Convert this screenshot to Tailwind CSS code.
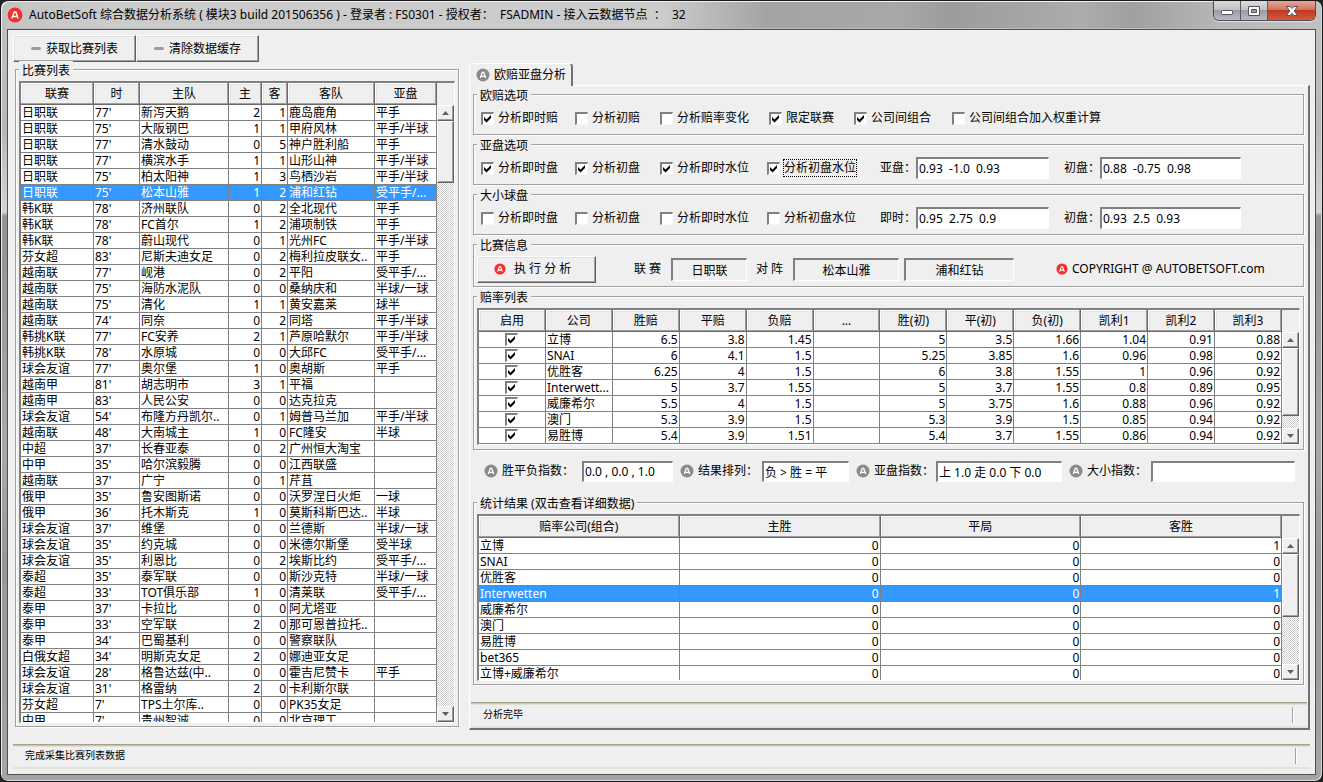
<!DOCTYPE html>
<html lang="zh-CN">
<head>
  <meta charset="UTF-8">
  <meta name="viewport" content="width=device-width, initial-scale=1.0">
  <title>AutoBetSoft 综合数据分析系统</title>
  <script src="https://cdn.jsdelivr.net/npm/@tailwindcss/browser@4"></script>
</head>
<body class="h-screen overflow-hidden bg-[#222] font-['Noto_Sans','Noto_Sans_CJK_SC',sans-serif] text-xs text-black">

  <!-- Shared shapes -->
  <svg class="hidden">
    <symbol id="tick" viewBox="0 0 13 13"><path d="M3 5l2.500 2.500L10 3v3l-4.500 4.500L3 8z" fill="#000"/></symbol>
    <symbol id="logo" viewBox="0 0 14 14"><circle cx="7" cy="7" r="6.500" fill="currentColor"/><path d="M4.300 10L6.300 4.300h1.400L9.700 10M5.200 8.300h3.600" fill="none" stroke="#fff" stroke-width="1.300"/></symbol>
    <symbol id="arrow-up" viewBox="0 0 7 4"><path d="M0 4L3.500 0L7 4z" fill="#606060"/></symbol>
    <symbol id="arrow-down" viewBox="0 0 7 4"><path d="M0 0h7L3.500 4z" fill="#606060"/></symbol>
  </svg>

  <div class="flex h-full flex-col rounded-lg border border-[#1a1a1a] bg-[linear-gradient(#c2c2c2_0,#b8b8b8_130px,#d4d4d4_211px,#949494_215px,#a8a8a8_450px,#989898_560px,#a4a4a4_100%)] px-1.5 pb-1.5 shadow-[inset_1px_1px_0_#f0f0f0,inset_-1px_-1px_0_#d8d8d8]">

    <!-- Title bar -->
    <header class="flex h-7 shrink-0 items-center gap-1.5 bg-[linear-gradient(90deg,#c4c4c4_0,#cbcbcb_8%,#cccccc_50%,#a4a4a4_58%,#a8a8a8_68%,#9c9c9c_72%,#acacac_82%,#a0a0a0_86%,#b8b8b8_93%,#c0c0c0_100%)] bg-[length:100%_26px] bg-[position:0_1px] bg-no-repeat">
      <svg class="size-4 text-[#f23030]"><use href="#logo"/></svg>
      <h1 class="flex-1 whitespace-pre">AutoBetSoft 综合数据分析系统 ( 模块3 build 201506356 ) - 登录者 : FS0301 - 授权者：  FSADMIN - 接入云数据节点  ：  32</h1>
      <div class="flex h-5 self-start overflow-hidden rounded-b-md border border-t-0 border-[#4a4a5a] shadow-[0_1px_0_#e4e4e4]">
        <button class="flex w-[27px] items-center justify-center border-r border-[#5a5a66] bg-[linear-gradient(#dcdcdc_0,#c2c2c6_45%,#9b9ba2_50%,#b9b9be_100%)]" aria-label="最小化">
          <svg class="h-2 w-3" viewBox="0 0 12 8"><rect x=".5" y="3.500" width="11" height="4" rx="1" fill="#fff" stroke="#51515f"/></svg>
        </button>
        <button class="flex w-[27px] items-center justify-center border-r border-[#5a5a66] bg-[linear-gradient(#dcdcdc_0,#c2c2c6_45%,#9b9ba2_50%,#b9b9be_100%)]" aria-label="最大化">
          <svg class="h-2.5 w-3" viewBox="0 0 12 10"><path d="M.5.5h11v9H.5zM3.500 3.500v3h5v-3z" fill="#fff" fill-rule="evenodd" stroke="#51515f"/></svg>
        </button>
        <button class="flex w-[47px] items-center justify-center bg-[linear-gradient(#e5a798_0,#d4735f_45%,#bd3a20_50%,#d8583c_100%)]" aria-label="关闭">
          <svg class="h-2.5 w-3" viewBox="0 0 12 10"><path d="M.5.5h3.500l2 2 2-2h3.500L8.200 5l3.300 4.500H8l-2-2-2 2H.5L3.800 5z" fill="#fff" stroke="#51515f"/></svg>
        </button>
      </div>
    </header>

    <div class="flex min-h-0 flex-1 flex-col border border-[#505050] bg-[#efefef] px-[5px] py-[5px]">
      <main class="flex min-h-0 flex-1 gap-2.5">

        <!-- Match list -->
        <section class="flex w-[446px] shrink-0 flex-col pb-[17px]">
          <div class="flex">
            <button class="flex h-[27px] w-[123px] items-center justify-center gap-[5px] border border-t-white border-r-[#606060] border-b-[#606060] border-l-white shadow-[inset_-1px_-1px_0_#a0a0a0,inset_1px_1px_0_#e3e3e3]"><span class="h-[3px] w-2.5 rounded-sm bg-[#9c9c9c]"></span>获取比赛列表</button>
            <button class="flex h-[27px] w-[123px] items-center justify-center gap-[5px] border border-t-white border-r-[#606060] border-b-[#606060] border-l-white shadow-[inset_-1px_-1px_0_#a0a0a0,inset_1px_1px_0_#e3e3e3]"><span class="h-[3px] w-2.5 rounded-sm bg-[#9c9c9c]"></span>清除数据缓存</button>
          </div>
          <fieldset class="-mt-px ml-0.5 flex min-h-0 flex-1 flex-col border border-[#a0a0a0] px-[3px] pt-1 pb-[3px] shadow-[1px_1px_0_#fff,inset_1px_1px_0_#fff]">
            <legend class="bg-[#efefef] px-[3px] pt-1 leading-3">比赛列表</legend>
            <div class="flex h-full min-h-0 overflow-hidden border-t-2 border-r border-b border-l-2 border-t-[#808080] border-r-white border-b-white border-l-[#808080]">
              <div class="flex-1 overflow-hidden">
                <table class="w-full table-fixed border-separate border-spacing-0">
                  <colgroup><col class="w-[73px]"><col class="w-[46px]"><col class="w-[89px]"><col class="w-[33px]"><col class="w-[26px]"><col class="w-[87px]"><col></colgroup>
                  <thead id="match-head"></thead>
                  <tbody id="match-body" class="bg-white"></tbody>
                </table>
              </div>
              <div class="scroll flex w-[17px] flex-col pt-[22px]" data-thumb="62"></div>
            </div>
          </fieldset>
        </section>

        <!-- Analysis tab -->
        <section class="flex min-w-0 flex-1 flex-col pt-7 pb-3.5">
          <button class="relative z-10 -mb-px flex h-[23px] w-[104px] shrink-0 items-center gap-1 rounded-t-sm border-t border-r-2 border-l border-t-white border-r-[#707070] border-l-white bg-[#efefef] pl-1.5">
            <svg class="size-3.5 text-[#8a8a8a]"><use href="#logo"/></svg>欧赔亚盘分析
          </button>
          <div class="flex min-h-0 flex-1 flex-col border-t border-r-2 border-b-2 border-l border-t-white border-r-[#707070] border-b-[#707070] border-l-white">
            <form class="flex min-h-0 flex-1 flex-col gap-px pr-1 pl-[3px]" onsubmit="return false">

              <fieldset class="border border-[#a0a0a0] px-[3px] shadow-[1px_1px_0_#fff,inset_1px_1px_0_#fff]">
                <legend class="bg-[#efefef] px-[3px] pt-1 leading-3">欧赔选项</legend>
                <div class="grid h-8 grid-cols-[94px_85px_109px_85px_98px_auto] items-center pl-1">
                  <label class="check flex items-center gap-1" data-on="1">分析即时赔</label>
                  <label class="check flex items-center gap-1">分析初赔</label>
                  <label class="check flex items-center gap-1">分析赔率变化</label>
                  <label class="check flex items-center gap-1" data-on="1">限定联赛</label>
                  <label class="check flex items-center gap-1" data-on="1">公司间组合</label>
                  <label class="check flex items-center gap-1">公司间组合加入权重计算</label>
                </div>
              </fieldset>

              <fieldset class="border border-[#a0a0a0] px-[3px] shadow-[1px_1px_0_#fff,inset_1px_1px_0_#fff]">
                <legend class="bg-[#efefef] px-[3px] pt-1 leading-3">亚盘选项</legend>
                <div class="grid h-8 grid-cols-[94px_85px_107px_113px_36px_148px_36px_141px] items-center pl-1">
                  <label class="check flex items-center gap-1" data-on="1">分析即时盘</label>
                  <label class="check flex items-center gap-1" data-on="1">分析初盘</label>
                  <label class="check flex items-center gap-1" data-on="1">分析即时水位</label>
                  <label class="check flex items-center gap-1" data-on="1"><span class="outline-1 outline-dotted outline-black">分析初盘水位</span></label>
                  <label for="asia-now">亚盘：</label>
                  <input id="asia-now" class="h-[22px] w-[133px] border-t-2 border-r border-b border-l-2 border-t-[#808080] border-r-white border-b-white border-l-[#808080] bg-white px-px outline-none" value="0.93  -1.0  0.93">
                  <label for="asia-first">初盘：</label>
                  <input id="asia-first" class="h-[22px] w-full border-t-2 border-r border-b border-l-2 border-t-[#808080] border-r-white border-b-white border-l-[#808080] bg-white px-px outline-none" value="0.88  -0.75  0.98">
                </div>
              </fieldset>

              <fieldset class="border border-[#a0a0a0] px-[3px] shadow-[1px_1px_0_#fff,inset_1px_1px_0_#fff]">
                <legend class="bg-[#efefef] px-[3px] pt-1 leading-3">大小球盘</legend>
                <div class="grid h-8 grid-cols-[94px_85px_107px_113px_36px_148px_36px_141px] items-center pl-1">
                  <label class="check flex items-center gap-1">分析即时盘</label>
                  <label class="check flex items-center gap-1">分析初盘</label>
                  <label class="check flex items-center gap-1">分析即时水位</label>
                  <label class="check flex items-center gap-1">分析初盘水位</label>
                  <label for="total-now">即时：</label>
                  <input id="total-now" class="h-[22px] w-[133px] border-t-2 border-r border-b border-l-2 border-t-[#808080] border-r-white border-b-white border-l-[#808080] bg-white px-px outline-none" value="0.95  2.75  0.9">
                  <label for="total-first">初盘：</label>
                  <input id="total-first" class="h-[22px] w-full border-t-2 border-r border-b border-l-2 border-t-[#808080] border-r-white border-b-white border-l-[#808080] bg-white px-px outline-none" value="0.93  2.5  0.93">
                </div>
              </fieldset>

              <fieldset class="border border-[#a0a0a0] px-[3px] shadow-[1px_1px_0_#fff,inset_1px_1px_0_#fff]">
                <legend class="bg-[#efefef] px-[3px] pt-1 leading-3">比赛信息</legend>
                <div class="flex h-[34px] items-center">
                  <button class="mr-[38px] flex h-[27px] w-[119px] items-center gap-2 border border-t-white border-r-[#606060] border-b-[#606060] border-l-white pl-4 shadow-[inset_-1px_-1px_0_#a0a0a0,inset_1px_1px_0_#e3e3e3]"><svg class="size-3 text-[#f23030]"><use href="#logo"/></svg>执 行 分 析</button>
                  <label for="league" class="w-[37px]">联 赛</label>
                  <input id="league" readonly class="mr-[9px] h-[23px] w-[76px] border-t-2 border-r border-b border-l-2 border-t-[#808080] border-r-white border-b-white border-l-[#808080] text-center outline-none" value="日职联">
                  <label for="home" class="w-[37px]">对 阵</label>
                  <input id="home" readonly class="mr-[5px] h-[23px] w-[106px] border-t-2 border-r border-b border-l-2 border-t-[#808080] border-r-white border-b-white border-l-[#808080] text-center outline-none" value="松本山雅">
                  <input aria-label="客队" readonly class="mr-[42px] h-[23px] w-[110px] border-t-2 border-r border-b border-l-2 border-t-[#808080] border-r-white border-b-white border-l-[#808080] text-center outline-none" value="浦和红钻">
                  <svg class="mr-1 size-3 text-[#f23030]"><use href="#logo"/></svg>
                  <span class="whitespace-nowrap">COPYRIGHT @ AUTOBETSOFT.com</span>
                </div>
              </fieldset>

              <fieldset class="border border-[#a0a0a0] px-[3px] pt-1 pb-1 shadow-[1px_1px_0_#fff,inset_1px_1px_0_#fff]">
                <legend class="bg-[#efefef] px-[3px] pt-1 leading-3">赔率列表</legend>
                <div class="flex border-t-2 border-r border-b border-l-2 border-t-[#808080] border-r-white border-b-white border-l-[#808080]">
                  <div class="flex-1 overflow-hidden">
                    <table class="w-full table-fixed border-separate border-spacing-0">
                      <thead id="odds-head"></thead>
                      <tbody id="odds-body" class="bg-white"></tbody>
                    </table>
                  </div>
                  <div class="scroll flex w-[17px] flex-col pt-[22px]" data-thumb="68"></div>
                </div>
              </fieldset>

              <div class="flex h-[42px] shrink-0 items-center gap-[7px] pb-0.5 pl-[11px]">
                <div class="flex items-center">
                  <label for="idx-win" class="flex w-[98px] items-center gap-1"><svg class="size-3.5 text-[#8a8a8a]"><use href="#logo"/></svg>胜平负指数：</label>
                  <input id="idx-win" class="h-[21px] w-[91px] border-t-2 border-r border-b border-l-2 border-t-[#808080] border-r-white border-b-white border-l-[#808080] bg-white px-px outline-none" value="0.0 , 0.0 , 1.0">
                </div>
                <div class="flex items-center">
                  <label for="idx-order" class="flex w-[82px] items-center gap-1 whitespace-nowrap"><svg class="size-3.5 text-[#8a8a8a]"><use href="#logo"/></svg>结果排列：</label>
                  <input id="idx-order" class="h-[21px] w-[87px] border-t-2 border-r border-b border-l-2 border-t-[#808080] border-r-white border-b-white border-l-[#808080] bg-white px-px outline-none" value="负 &gt; 胜 = 平">
                </div>
                <div class="flex items-center">
                  <label for="idx-asia" class="flex w-20 items-center gap-1 whitespace-nowrap"><svg class="size-3.5 text-[#8a8a8a]"><use href="#logo"/></svg>亚盘指数：</label>
                  <input id="idx-asia" class="h-[21px] w-[126px] border-t-2 border-r border-b border-l-2 border-t-[#808080] border-r-white border-b-white border-l-[#808080] bg-white px-px outline-none" value="上 1.0 走 0.0 下 0.0">
                </div>
                <div class="flex items-center">
                  <label for="idx-total" class="flex w-[82px] items-center gap-1 whitespace-nowrap"><svg class="size-3.5 text-[#8a8a8a]"><use href="#logo"/></svg>大小指数：</label>
                  <input id="idx-total" class="h-[21px] w-36 border-t-2 border-r border-b border-l-2 border-t-[#808080] border-r-white border-b-white border-l-[#808080] bg-white px-px outline-none">
                </div>
              </div>

              <fieldset class="mb-[17px] min-h-0 flex-1 border border-[#a0a0a0] px-[3px] pt-1 pb-[3px] shadow-[1px_1px_0_#fff,inset_1px_1px_0_#fff]">
                <legend class="bg-[#efefef] px-[3px] pt-1 leading-3">统计结果 (双击查看详细数据)</legend>
                <div class="flex h-full overflow-hidden border-t-2 border-r border-b border-l-2 border-t-[#808080] border-r-white border-b-white border-l-[#808080]">
                  <div class="flex-1 overflow-hidden">
                    <table class="w-full table-fixed border-separate border-spacing-0">
                      <thead id="stat-head"></thead>
                      <tbody id="stat-body" class="bg-white"></tbody>
                    </table>
                  </div>
                  <div class="scroll flex w-[17px] flex-col pt-[22px]" data-thumb="63"></div>
                </div>
              </fieldset>
            </form>

            <div class="mx-px flex h-[26px] shrink-0 items-center justify-between border-t border-b-2 border-t-[#a0a08c] border-b-[#e4e2d4] pr-[13px] pl-3 text-[10px] shadow-[inset_0_1px_0_#c8c6b4,inset_0_2px_0_#e2e0d2]">
              <span>分析完毕</span><span class="h-4 border-r border-l border-l-[#a0a0a0] border-r-white"></span>
            </div>
          </div>
        </section>
      </main>

      <footer class="flex h-[25px] shrink-0 items-center justify-between border-t border-b-2 border-t-[#a0a08c] border-b-[#e4e2d4] pr-[13px] pl-3 text-[10px] shadow-[inset_0_1px_0_#c8c6b4,inset_0_2px_0_#e2e0d2]">
        <span>完成采集比赛列表数据</span><span class="h-4 border-r border-l border-l-[#a0a0a0] border-r-white"></span>
      </footer>
    </div>
  </div>

  <script>
    const matches = `日职联|77'|新泻天鹅|2|1|鹿岛鹿角|平手
日职联|75'|大阪钢巴|1|1|甲府风林|平手/半球
日职联|77'|清水鼓动|0|5|神户胜利船|平手
日职联|77'|横滨水手|1|1|山形山神|平手/半球
日职联|75'|柏太阳神|1|3|鸟栖沙岩|平手/半球
日职联|75'|松本山雅|1|2|浦和红钻|受平手/...
韩K联|78'|济州联队|0|2|全北现代|平手
韩K联|78'|FC首尔|1|2|浦项制铁|平手
韩K联|78'|蔚山现代|0|1|光州FC|平手/半球
芬女超|83'|尼斯夫迪女足|0|2|梅利拉皮联女..|平手
越南联|77'|岘港|0|2|平阳|受平手/...
越南联|75'|海防水泥队|0|0|桑纳庆和|半球/一球
越南联|75'|清化|1|1|黄安嘉莱|球半
越南联|74'|同奈|0|2|同塔|平手/半球
韩挑K联|77'|FC安养|2|1|芦原哈默尔|平手/半球
韩挑K联|78'|水原城|0|0|大邱FC|受平手/...
球会友谊|77'|奥尔堡|1|0|奥胡斯|平手
越南甲|81'|胡志明市|3|1|平福|
越南甲|83'|人民公安|0|0|达克拉克|
球会友谊|54'|布隆方丹凯尔..|0|1|姆普马兰加|平手/半球
越南联|48'|大南城主|1|0|FC隆安|半球
中超|37'|长春亚泰|0|2|广州恒大淘宝|
中甲|35'|哈尔滨毅腾|0|0|江西联盛|
越南联|37'|广宁|0|1|芹苴|
俄甲|35'|鲁安图斯诺|0|0|沃罗涅日火炬|一球
俄甲|36'|托木斯克|1|0|莫斯科斯巴达..|半球
球会友谊|37'|维堡|0|0|兰德斯|半球/一球
球会友谊|35'|约克城|0|0|米德尔斯堡|受半球
球会友谊|35'|利恩比|0|2|埃斯比约|受平手/...
泰超|35'|泰军联|0|0|斯沙克特|半球/一球
泰超|33'|TOT俱乐部|1|0|清莱联|受平手/...
泰甲|37'|卡拉比|0|0|阿尤塔亚|
泰甲|33'|空军联|2|0|那可恩普拉托..|
泰甲|34'|巴蜀基利|0|0|警察联队|
白俄女超|34'|明斯克女足|2|0|娜迪亚女足|
球会友谊|28'|格鲁达兹(中..|0|0|霍吉尼赞卡|平手
球会友谊|31'|格雷纳|2|0|卡利斯尔联|
芬女超|7'|TPS土尔库..|0|0|PK35女足|
中甲|7'|贵州智诚|0|0|北京理工|`;

    const odds = `*|立博|6.5|3.8|1.45||5|3.5|1.66|1.04|0.91|0.88
*|SNAI|6|4.1|1.5||5.25|3.85|1.6|0.96|0.98|0.92
*|优胜客|6.25|4|1.5||6|3.8|1.55|1|0.96|0.92
*|Interwett...|5|3.7|1.55||5|3.7|1.55|0.8|0.89|0.95
*|威廉希尔|5.5|4|1.5||5|3.75|1.6|0.88|0.96|0.92
*|澳门|5.3|3.9|1.5||5.3|3.9|1.5|0.85|0.94|0.92
*|易胜博|5.4|3.9|1.51||5.4|3.7|1.55|0.86|0.94|0.92`;

    const stats = `立博|0|0|1
SNAI|0|0|0
优胜客|0|0|0
Interwetten|0|0|1
威廉希尔|0|0|0
澳门|0|0|0
易胜博|0|0|0
bet365|0|0|0
立博+威廉希尔|0|0|0`;

    const box = (on, name) => `<span class="grid size-[13px] shrink-0">
      <input type="checkbox" ${on ? 'checked' : ''} ${name ? `aria-label="${name}"` : ''} class="peer col-start-1 row-start-1 size-[13px] appearance-none border-t-2 border-r border-b border-l-2 border-t-[#808080] border-r-[#f8f8f8] border-b-[#f8f8f8] border-l-[#808080] bg-white">
      <svg class="pointer-events-none invisible col-start-1 row-start-1 size-[13px] peer-checked:visible"><use href="#tick"/></svg></span>`;

    const head = (id, names) => {
      document.getElementById(id).innerHTML = '<tr>' + names.split('|').map(n =>
        `<th class="h-[22px] border-r border-b border-[#696969] p-0 text-center leading-5 font-normal shadow-[inset_-1px_-1px_0_#a0a0a0,inset_1px_1px_0_#fff,inset_2px_2px_0_#e3e3e3]">${n}</th>`).join('') + '</tr>';
    };

    // right: indexes of the right-aligned columns, selected: index of the highlighted row
    const body = (id, data, right, selected) => {
      document.getElementById(id).innerHTML = data.split('\n').map((line, r) => {
        const cells = line.split('|');
        return `<tr class="${r === selected ? 'bg-[#3399ff] text-white' : ''}">` + cells.map((c, i) =>
          `<td class="h-4 overflow-hidden border-r border-b border-[#808080] px-px py-0 leading-[15px] whitespace-nowrap ${right.includes(i) ? 'text-right' : ''}">${
            c === '*' ? `<div class="flex justify-center">${box(true, cells[1])}</div>` : c}</td>`).join('') + '</tr>';
      }).join('');
    };

    head('match-head', '联赛|时|主队|主|客|客队|亚盘');
    body('match-body', matches, [3, 4], 5);
    head('odds-head', '启用|公司|胜赔|平赔|负赔|...|胜(初)|平(初)|负(初)|凯利1|凯利2|凯利3');
    body('odds-body', odds, [2, 3, 4, 6, 7, 8, 9, 10, 11], -1);
    head('stat-head', '赔率公司(组合)|主胜|平局|客胜');
    body('stat-body', stats, [1, 2, 3], 3);

    document.querySelectorAll('.check').forEach(el => {
      el.insertAdjacentHTML('afterbegin', box(el.dataset.on));
    });

    document.querySelectorAll('.scroll').forEach(el => {
      const raised = 'border border-t-white border-r-[#606060] border-b-[#606060] border-l-white bg-[#efefef] shadow-[inset_-1px_-1px_0_#a0a0a0]';
      el.innerHTML = `
        <button type="button" aria-label="向上" class="flex h-4 shrink-0 items-center justify-center ${raised}"><svg class="h-1 w-[7px]"><use href="#arrow-up"/></svg></button>
        <div class="flex-1 bg-[repeating-conic-gradient(#fff_0_25%,#cdcdcd_0_50%)] bg-[length:2px_2px]"><div class="${raised}" style="height:${el.dataset.thumb}px"></div></div>
        <button type="button" aria-label="向下" class="flex h-4 shrink-0 items-center justify-center ${raised}"><svg class="h-1 w-[7px]"><use href="#arrow-down"/></svg></button>`;
    });
  </script>
</body>
</html>
